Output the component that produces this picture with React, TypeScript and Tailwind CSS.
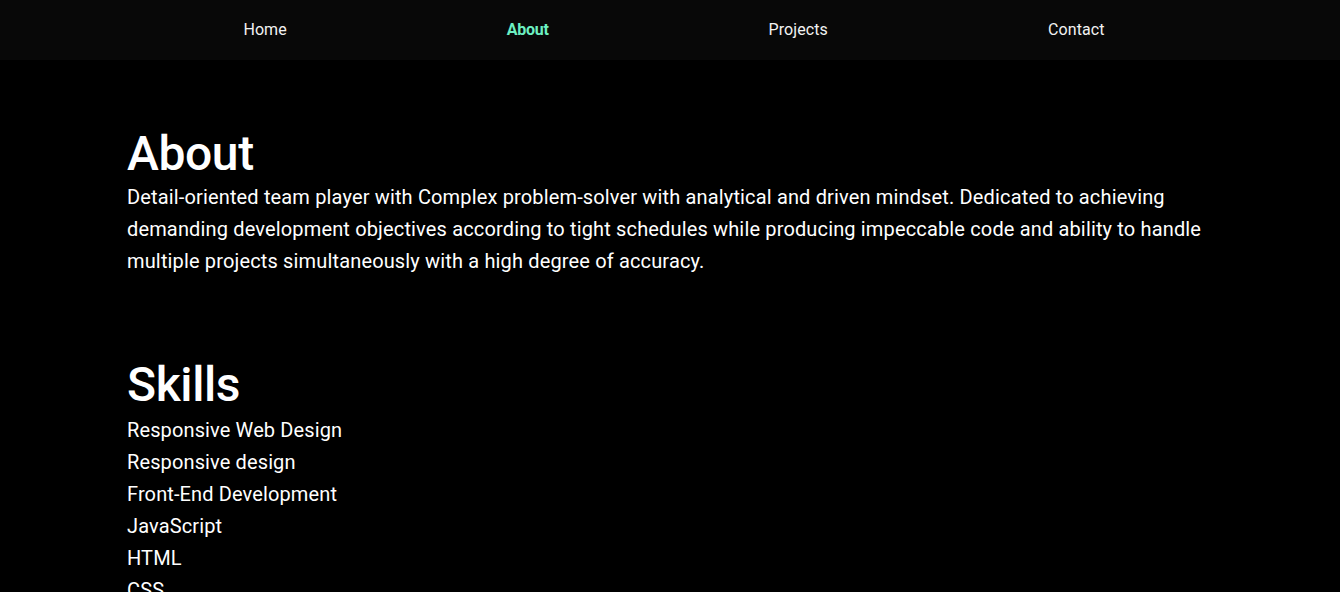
import React from "react";

const links = ["Home", "About", "Projects", "Contact"];

const skills = [
  "Responsive Web Design",
  "Responsive design",
  "Front-End Development",
  "JavaScript",
  "HTML",
  "CSS",
  "React",
];

export default function App() {
  return (
    <div className="min-h-screen bg-black text-white font-['Roboto',sans-serif]">
      {/* Barre de navigation */}
      <nav className="h-[60px] bg-[#080808] flex items-center justify-center gap-[220px] pl-[8px]">
        {links.map((l) => (
          <a
            key={l}
            className={
              l === "About"
                ? "text-base font-bold text-[#6cf0c2] tracking-[-0.3px]"
                : "text-base text-[#f2f2f2] tracking-[0.1px]"
            }
          >
            {l}
          </a>
        ))}
      </nav>

      <main className="px-[127px] pt-[70px]">
        <section>
          <h1 className="text-5xl leading-none font-medium tracking-[-0.4px]">About</h1>
          <p className="mt-[3px] text-xl leading-8 tracking-[0.15px] max-w-[1086px]">
            Detail-oriented team player with Complex problem-solver with analytical and driven mindset.
            Dedicated to achieving demanding development objectives according to tight schedules while
            producing impeccable code and ability to handle multiple projects simultaneously with a high
            degree of accuracy.
          </p>
        </section>

        <section className="mt-[84px]">
          <h1 className="text-5xl leading-none font-medium tracking-[-0.4px]">Skills</h1>
          <ul className="mt-[5px] text-xl leading-8 tracking-[0.12px]">
            {skills.map((s) => (
              <li key={s}>{s}</li>
            ))}
          </ul>
        </section>
      </main>
    </div>
  );
}
